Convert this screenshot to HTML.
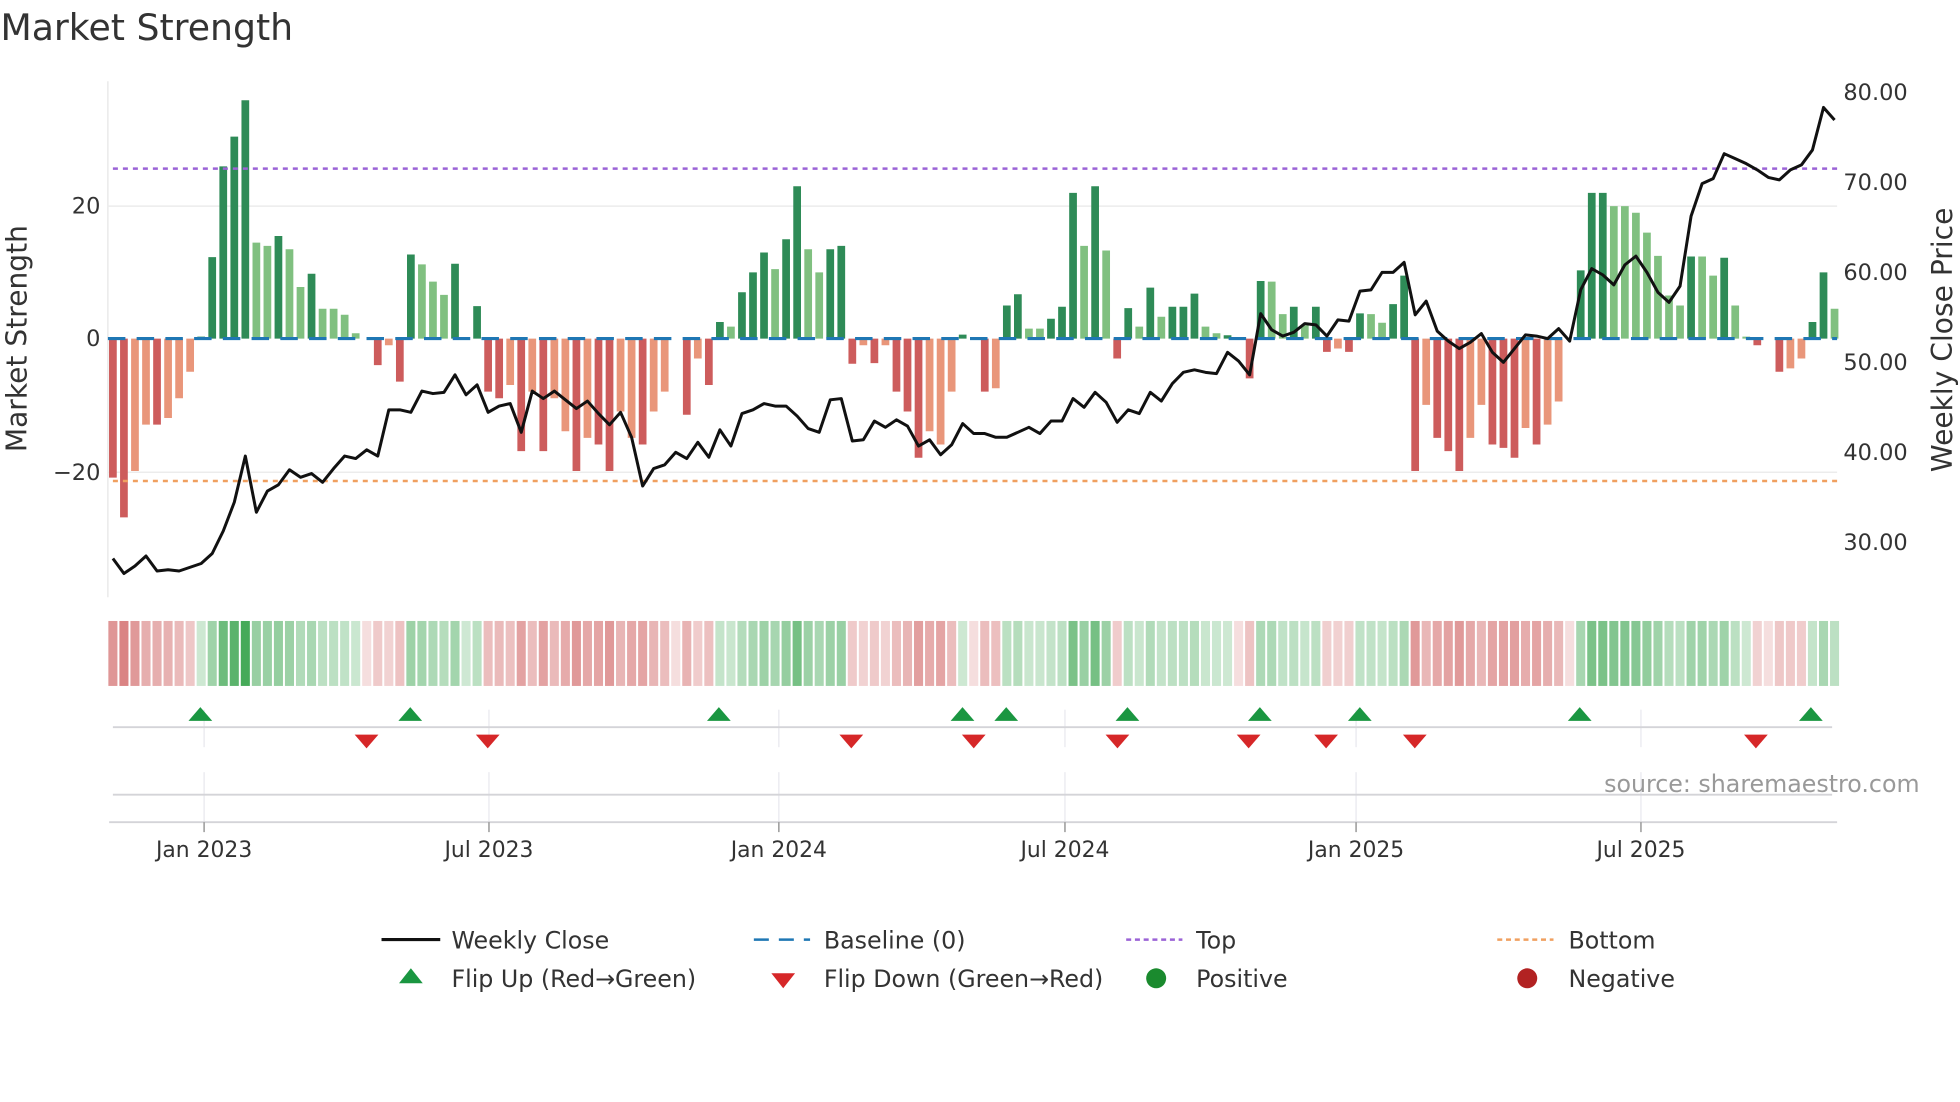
<!DOCTYPE html>
<html><head><meta charset="utf-8"><style>
html,body{margin:0;padding:0;background:#fff;}
svg{display:block;font-family:"DejaVu Sans","Liberation Sans",sans-serif;}
.g{fill:#3ca550}.r{fill:#cd5a5a}
</style></head><body>
<svg width="1960" height="1102" viewBox="0 0 1568 882" xmlns="http://www.w3.org/2000/svg">
<rect width="1568" height="882" fill="#fff"/>
<text x="0" y="32" font-size="29" fill="#333">Market Strength</text>
<line x1="86" y1="65" x2="86" y2="478" stroke="#e6e6e6" stroke-width="1"/>
<line x1="86" y1="165" x2="1470" y2="165" stroke="#ececec" stroke-width="1.2"/>
<line x1="86" y1="378" x2="1470" y2="378" stroke="#ececec" stroke-width="1.2"/>
<g transform="translate(90,271) scale(8.833,-5.3)">
<path fill="#2e8b57" d="M7.65 0V0.3h0.7V0zM8.65 0V12.3h0.7V0zM9.65 0V26h0.7V0zM10.65 0V30.5h0.7V0zM11.65 0V36h0.7V0zM14.65 0V15.5h0.7V0zM17.65 0V9.8h0.7V0zM26.65 0V12.7h0.7V0zM30.65 0V11.3h0.7V0zM32.65 0V4.9h0.7V0zM54.65 0V2.5h0.7V0zM56.65 0V7h0.7V0zM57.65 0V10h0.7V0zM58.65 0V13h0.7V0zM60.65 0V15h0.7V0zM61.65 0V23h0.7V0zM64.65 0V13.5h0.7V0zM65.65 0V14h0.7V0zM76.65 0V0.6h0.7V0zM80.65 0V5h0.7V0zM81.65 0V6.7h0.7V0zM84.65 0V3h0.7V0zM85.65 0V4.8h0.7V0zM86.65 0V22h0.7V0zM88.65 0V23h0.7V0zM91.65 0V4.6h0.7V0zM93.65 0V7.7h0.7V0zM95.65 0V4.8h0.7V0zM96.65 0V4.8h0.7V0zM97.65 0V6.8h0.7V0zM100.65 0V0.5h0.7V0zM103.65 0V8.7h0.7V0zM106.65 0V4.8h0.7V0zM108.65 0V4.8h0.7V0zM112.65 0V3.8h0.7V0zM115.65 0V5.2h0.7V0zM116.65 0V9.5h0.7V0zM132.65 0V10.3h0.7V0zM133.65 0V22h0.7V0zM134.65 0V22h0.7V0zM142.65 0V12.4h0.7V0zM145.65 0V12.2h0.7V0zM153.65 0V2.5h0.7V0zM154.65 0V10h0.7V0z"/>
<path fill="#80c080" d="M12.65 0V14.5h0.7V0zM13.65 0V14h0.7V0zM15.65 0V13.5h0.7V0zM16.65 0V7.8h0.7V0zM18.65 0V4.5h0.7V0zM19.65 0V4.5h0.7V0zM20.65 0V3.6h0.7V0zM21.65 0V0.8h0.7V0zM27.65 0V11.2h0.7V0zM28.65 0V8.6h0.7V0zM29.65 0V6.6h0.7V0zM31.65 0V0.2h0.7V0zM55.65 0V1.8h0.7V0zM59.65 0V10.5h0.7V0zM62.65 0V13.5h0.7V0zM63.65 0V10h0.7V0zM82.65 0V1.5h0.7V0zM83.65 0V1.5h0.7V0zM87.65 0V14h0.7V0zM89.65 0V13.3h0.7V0zM92.65 0V1.8h0.7V0zM94.65 0V3.3h0.7V0zM98.65 0V1.8h0.7V0zM99.65 0V0.8h0.7V0zM104.65 0V8.6h0.7V0zM105.65 0V3.7h0.7V0zM107.65 0V2h0.7V0zM113.65 0V3.7h0.7V0zM114.65 0V2.4h0.7V0zM135.65 0V20h0.7V0zM136.65 0V20h0.7V0zM137.65 0V19h0.7V0zM138.65 0V16h0.7V0zM139.65 0V12.5h0.7V0zM140.65 0V6.5h0.7V0zM141.65 0V5h0.7V0zM143.65 0V12.4h0.7V0zM144.65 0V9.5h0.7V0zM146.65 0V5h0.7V0zM147.65 0V0.3h0.7V0zM155.65 0V4.5h0.7V0z"/>
<path fill="#cd5c5c" d="M-0.35 0V-21h0.7V0zM0.65 0V-27h0.7V0zM3.65 0V-13h0.7V0zM23.65 0V-4h0.7V0zM25.65 0V-6.5h0.7V0zM33.65 0V-8h0.7V0zM34.65 0V-9h0.7V0zM36.65 0V-17h0.7V0zM38.65 0V-17h0.7V0zM41.65 0V-20h0.7V0zM43.65 0V-16h0.7V0zM44.65 0V-20h0.7V0zM47.65 0V-16h0.7V0zM51.65 0V-11.5h0.7V0zM53.65 0V-7h0.7V0zM66.65 0V-3.8h0.7V0zM68.65 0V-3.7h0.7V0zM70.65 0V-8h0.7V0zM71.65 0V-11h0.7V0zM72.65 0V-18h0.7V0zM78.65 0V-8h0.7V0zM90.65 0V-3h0.7V0zM102.65 0V-6h0.7V0zM109.65 0V-2h0.7V0zM111.65 0V-2h0.7V0zM117.65 0V-20h0.7V0zM119.65 0V-15h0.7V0zM120.65 0V-17h0.7V0zM121.65 0V-20h0.7V0zM124.65 0V-16h0.7V0zM125.65 0V-16.5h0.7V0zM126.65 0V-18h0.7V0zM128.65 0V-16h0.7V0zM148.65 0V-1h0.7V0zM150.65 0V-5h0.7V0z"/>
<path fill="#e9967a" d="M1.65 0V-20h0.7V0zM2.65 0V-13h0.7V0zM4.65 0V-12h0.7V0zM5.65 0V-9h0.7V0zM6.65 0V-5h0.7V0zM24.65 0V-1h0.7V0zM35.65 0V-7h0.7V0zM37.65 0V-8h0.7V0zM39.65 0V-9h0.7V0zM40.65 0V-14h0.7V0zM42.65 0V-15h0.7V0zM45.65 0V-11h0.7V0zM46.65 0V-15h0.7V0zM48.65 0V-11h0.7V0zM49.65 0V-8h0.7V0zM52.65 0V-3h0.7V0zM67.65 0V-1h0.7V0zM69.65 0V-1h0.7V0zM73.65 0V-14h0.7V0zM74.65 0V-16h0.7V0zM75.65 0V-8h0.7V0zM79.65 0V-7.5h0.7V0zM110.65 0V-1.5h0.7V0zM118.65 0V-10h0.7V0zM122.65 0V-15h0.7V0zM123.65 0V-10h0.7V0zM127.65 0V-13.5h0.7V0zM129.65 0V-13h0.7V0zM130.65 0V-9.5h0.7V0zM151.65 0V-4.5h0.7V0zM152.65 0V-3h0.7V0z"/>
</g>
<line x1="86" y1="271" x2="1470" y2="271" stroke="#1f77b4" stroke-width="2.5" stroke-dasharray="14,9"/>
<line x1="90" y1="135" x2="1470" y2="135" stroke="#9b63d6" stroke-width="2" stroke-dasharray="4,4"/>
<line x1="90" y1="385" x2="1470" y2="385" stroke="#f0a060" stroke-width="2" stroke-dasharray="4,4"/>
<g transform="translate(90,0) scale(8.833,1)">
<polyline fill="none" stroke="#111" stroke-width="3" stroke-linejoin="round" vector-effect="non-scaling-stroke" points="0,447 1,459 2,453 3,445 4,457 5,456 6,457 7,454 8,451 9,443 10,425 11,402 12,365 13,410 14,393 15,388 16,376 17,382 18,379 19,386 20,375 21,365 22,367 23,360 24,365 25,328 26,328 27,330 28,313 29,315 30,314 31,300 32,316 33,308 34,330 35,325 36,323 37,346 38,313 39,319 40,313 41,320 42,327 43,321 44,331 45,340 46,330 47,350 48,389 49,375 50,372 51,362 52,367 53,354 54,366 55,344 56,357 57,331 58,328 59,323 60,325 61,325 62,333 63,343 64,346 65,320 66,319 67,353 68,352 69,337 70,342 71,336 72,341 73,357 74,352 75,364 76,356 77,339 78,347 79,347 80,350 81,350 82,346 83,342 84,347 85,337 86,337 87,319 88,326 89,314 90,322 91,338 92,328 93,331 94,314 95,321 96,307 97,298 98,296 99,298 100,299 101,282 102,289 103,300 104,251 105,264 106,269 107,266 108,259 109,260 110,269 111,256 112,257 113,233 114,232 115,218 116,218 117,210 118,252 119,241 120,265 121,273 122,279 123,274 124,267 125,282 126,290 127,279 128,268 129,269 130,271 131,263 132,273 133,232 134,215 135,220 136,228 137,212 138,205 139,218 140,234 141,242 142,229 143,173 144,147 145,143 146,123 147,127 148,131 149,136 150,142 151,144 152,136 153,132 154,120 155,86 156,96"/>
</g>
<g font-size="18" fill="#333">
<text x="80" y="171" text-anchor="end">20</text>
<text x="80" y="277" text-anchor="end">0</text>
<text x="80" y="384" text-anchor="end">−20</text>
<text x="1475" y="80">80.00</text>
<text x="1475" y="152">70.00</text>
<text x="1475" y="224">60.00</text>
<text x="1475" y="296">50.00</text>
<text x="1475" y="368">40.00</text>
<text x="1475" y="440">30.00</text>
</g>
<text transform="translate(21,271) rotate(-90)" font-size="22.5" fill="#333" text-anchor="middle">Market Strength</text>
<text transform="translate(1562,272) rotate(-90)" font-size="22.5" fill="#333" text-anchor="middle">Weekly Close Price</text>
<g transform="translate(90,497) scale(8.833,1)">
<rect class="r" x="-0.41" width="0.82" height="52" fill-opacity=".64"/>
<rect class="r" x="0.59" width="0.82" height="52" fill-opacity=".75"/>
<rect class="r" x="1.59" width="0.82" height="52" fill-opacity=".62"/>
<rect class="r" x="2.59" width="0.82" height="52" fill-opacity=".49"/>
<rect class="r" x="3.59" width="0.82" height="52" fill-opacity=".49"/>
<rect class="r" x="4.59" width="0.82" height="52" fill-opacity=".47"/>
<rect class="r" x="5.59" width="0.82" height="52" fill-opacity=".42"/>
<rect class="r" x="6.59" width="0.82" height="52" fill-opacity=".34"/>
<rect class="g" x="7.59" width="0.82" height="52" fill-opacity=".26"/>
<rect class="g" x="8.59" width="0.82" height="52" fill-opacity=".49"/>
<rect class="g" x="9.59" width="0.82" height="52" fill-opacity=".75"/>
<rect class="g" x="10.59" width="0.82" height="52" fill-opacity=".84"/>
<rect class="g" x="11.59" width="0.82" height="52" fill-opacity=".95"/>
<rect class="g" x="12.59" width="0.82" height="52" fill-opacity=".53"/>
<rect class="g" x="13.59" width="0.82" height="52" fill-opacity=".52"/>
<rect class="g" x="14.59" width="0.82" height="52" fill-opacity=".55"/>
<rect class="g" x="15.59" width="0.82" height="52" fill-opacity=".51"/>
<rect class="g" x="16.59" width="0.82" height="52" fill-opacity=".40"/>
<rect class="g" x="17.59" width="0.82" height="52" fill-opacity=".44"/>
<rect class="g" x="18.59" width="0.82" height="52" fill-opacity=".34"/>
<rect class="g" x="19.59" width="0.82" height="52" fill-opacity=".34"/>
<rect class="g" x="20.59" width="0.82" height="52" fill-opacity=".32"/>
<rect class="g" x="21.59" width="0.82" height="52" fill-opacity=".27"/>
<rect class="r" x="22.59" width="0.82" height="52" fill-opacity=".2"/>
<rect class="r" x="23.59" width="0.82" height="52" fill-opacity=".32"/>
<rect class="r" x="24.59" width="0.82" height="52" fill-opacity=".27"/>
<rect class="r" x="25.59" width="0.82" height="52" fill-opacity=".37"/>
<rect class="g" x="26.59" width="0.82" height="52" fill-opacity=".50"/>
<rect class="g" x="27.59" width="0.82" height="52" fill-opacity=".47"/>
<rect class="g" x="28.59" width="0.82" height="52" fill-opacity=".42"/>
<rect class="g" x="29.59" width="0.82" height="52" fill-opacity=".38"/>
<rect class="g" x="30.59" width="0.82" height="52" fill-opacity=".47"/>
<rect class="g" x="31.59" width="0.82" height="52" fill-opacity=".25"/>
<rect class="g" x="32.59" width="0.82" height="52" fill-opacity=".35"/>
<rect class="r" x="33.59" width="0.82" height="52" fill-opacity=".40"/>
<rect class="r" x="34.59" width="0.82" height="52" fill-opacity=".42"/>
<rect class="r" x="35.59" width="0.82" height="52" fill-opacity=".38"/>
<rect class="r" x="36.59" width="0.82" height="52" fill-opacity=".56"/>
<rect class="r" x="37.59" width="0.82" height="52" fill-opacity=".40"/>
<rect class="r" x="38.59" width="0.82" height="52" fill-opacity=".56"/>
<rect class="r" x="39.59" width="0.82" height="52" fill-opacity=".42"/>
<rect class="r" x="40.59" width="0.82" height="52" fill-opacity=".51"/>
<rect class="r" x="41.59" width="0.82" height="52" fill-opacity=".62"/>
<rect class="r" x="42.59" width="0.82" height="52" fill-opacity=".53"/>
<rect class="r" x="43.59" width="0.82" height="52" fill-opacity=".55"/>
<rect class="r" x="44.59" width="0.82" height="52" fill-opacity=".62"/>
<rect class="r" x="45.59" width="0.82" height="52" fill-opacity=".45"/>
<rect class="r" x="46.59" width="0.82" height="52" fill-opacity=".53"/>
<rect class="r" x="47.59" width="0.82" height="52" fill-opacity=".55"/>
<rect class="r" x="48.59" width="0.82" height="52" fill-opacity=".45"/>
<rect class="r" x="49.59" width="0.82" height="52" fill-opacity=".40"/>
<rect class="r" x="50.59" width="0.82" height="52" fill-opacity=".2"/>
<rect class="r" x="51.59" width="0.82" height="52" fill-opacity=".46"/>
<rect class="r" x="52.59" width="0.82" height="52" fill-opacity=".31"/>
<rect class="r" x="53.59" width="0.82" height="52" fill-opacity=".38"/>
<rect class="g" x="54.59" width="0.82" height="52" fill-opacity=".30"/>
<rect class="g" x="55.59" width="0.82" height="52" fill-opacity=".28"/>
<rect class="g" x="56.59" width="0.82" height="52" fill-opacity=".39"/>
<rect class="g" x="57.59" width="0.82" height="52" fill-opacity=".44"/>
<rect class="g" x="58.59" width="0.82" height="52" fill-opacity=".50"/>
<rect class="g" x="59.59" width="0.82" height="52" fill-opacity=".45"/>
<rect class="g" x="60.59" width="0.82" height="52" fill-opacity=".54"/>
<rect class="g" x="61.59" width="0.82" height="52" fill-opacity=".70"/>
<rect class="g" x="62.59" width="0.82" height="52" fill-opacity=".51"/>
<rect class="g" x="63.59" width="0.82" height="52" fill-opacity=".44"/>
<rect class="g" x="64.59" width="0.82" height="52" fill-opacity=".51"/>
<rect class="g" x="65.59" width="0.82" height="52" fill-opacity=".52"/>
<rect class="r" x="66.59" width="0.82" height="52" fill-opacity=".32"/>
<rect class="r" x="67.59" width="0.82" height="52" fill-opacity=".27"/>
<rect class="r" x="68.59" width="0.82" height="52" fill-opacity=".32"/>
<rect class="r" x="69.59" width="0.82" height="52" fill-opacity=".27"/>
<rect class="r" x="70.59" width="0.82" height="52" fill-opacity=".40"/>
<rect class="r" x="71.59" width="0.82" height="52" fill-opacity=".45"/>
<rect class="r" x="72.59" width="0.82" height="52" fill-opacity=".58"/>
<rect class="r" x="73.59" width="0.82" height="52" fill-opacity=".51"/>
<rect class="r" x="74.59" width="0.82" height="52" fill-opacity=".55"/>
<rect class="r" x="75.59" width="0.82" height="52" fill-opacity=".40"/>
<rect class="g" x="76.59" width="0.82" height="52" fill-opacity=".26"/>
<rect class="r" x="77.59" width="0.82" height="52" fill-opacity=".2"/>
<rect class="r" x="78.59" width="0.82" height="52" fill-opacity=".40"/>
<rect class="r" x="79.59" width="0.82" height="52" fill-opacity=".39"/>
<rect class="g" x="80.59" width="0.82" height="52" fill-opacity=".35"/>
<rect class="g" x="81.59" width="0.82" height="52" fill-opacity=".38"/>
<rect class="g" x="82.59" width="0.82" height="52" fill-opacity=".28"/>
<rect class="g" x="83.59" width="0.82" height="52" fill-opacity=".28"/>
<rect class="g" x="84.59" width="0.82" height="52" fill-opacity=".31"/>
<rect class="g" x="85.59" width="0.82" height="52" fill-opacity=".34"/>
<rect class="g" x="86.59" width="0.82" height="52" fill-opacity=".68"/>
<rect class="g" x="87.59" width="0.82" height="52" fill-opacity=".52"/>
<rect class="g" x="88.59" width="0.82" height="52" fill-opacity=".70"/>
<rect class="g" x="89.59" width="0.82" height="52" fill-opacity=".51"/>
<rect class="r" x="90.59" width="0.82" height="52" fill-opacity=".31"/>
<rect class="g" x="91.59" width="0.82" height="52" fill-opacity=".34"/>
<rect class="g" x="92.59" width="0.82" height="52" fill-opacity=".28"/>
<rect class="g" x="93.59" width="0.82" height="52" fill-opacity=".40"/>
<rect class="g" x="94.59" width="0.82" height="52" fill-opacity=".31"/>
<rect class="g" x="95.59" width="0.82" height="52" fill-opacity=".34"/>
<rect class="g" x="96.59" width="0.82" height="52" fill-opacity=".34"/>
<rect class="g" x="97.59" width="0.82" height="52" fill-opacity=".38"/>
<rect class="g" x="98.59" width="0.82" height="52" fill-opacity=".28"/>
<rect class="g" x="99.59" width="0.82" height="52" fill-opacity=".27"/>
<rect class="g" x="100.59" width="0.82" height="52" fill-opacity=".26"/>
<rect class="r" x="101.59" width="0.82" height="52" fill-opacity=".2"/>
<rect class="r" x="102.59" width="0.82" height="52" fill-opacity=".36"/>
<rect class="g" x="103.59" width="0.82" height="52" fill-opacity=".42"/>
<rect class="g" x="104.59" width="0.82" height="52" fill-opacity=".42"/>
<rect class="g" x="105.59" width="0.82" height="52" fill-opacity=".32"/>
<rect class="g" x="106.59" width="0.82" height="52" fill-opacity=".34"/>
<rect class="g" x="107.59" width="0.82" height="52" fill-opacity=".29"/>
<rect class="g" x="108.59" width="0.82" height="52" fill-opacity=".34"/>
<rect class="r" x="109.59" width="0.82" height="52" fill-opacity=".29"/>
<rect class="r" x="110.59" width="0.82" height="52" fill-opacity=".28"/>
<rect class="r" x="111.59" width="0.82" height="52" fill-opacity=".29"/>
<rect class="g" x="112.59" width="0.82" height="52" fill-opacity=".32"/>
<rect class="g" x="113.59" width="0.82" height="52" fill-opacity=".32"/>
<rect class="g" x="114.59" width="0.82" height="52" fill-opacity=".30"/>
<rect class="g" x="115.59" width="0.82" height="52" fill-opacity=".35"/>
<rect class="g" x="116.59" width="0.82" height="52" fill-opacity=".43"/>
<rect class="r" x="117.59" width="0.82" height="52" fill-opacity=".62"/>
<rect class="r" x="118.59" width="0.82" height="52" fill-opacity=".44"/>
<rect class="r" x="119.59" width="0.82" height="52" fill-opacity=".53"/>
<rect class="r" x="120.59" width="0.82" height="52" fill-opacity=".56"/>
<rect class="r" x="121.59" width="0.82" height="52" fill-opacity=".62"/>
<rect class="r" x="122.59" width="0.82" height="52" fill-opacity=".53"/>
<rect class="r" x="123.59" width="0.82" height="52" fill-opacity=".44"/>
<rect class="r" x="124.59" width="0.82" height="52" fill-opacity=".55"/>
<rect class="r" x="125.59" width="0.82" height="52" fill-opacity=".56"/>
<rect class="r" x="126.59" width="0.82" height="52" fill-opacity=".58"/>
<rect class="r" x="127.59" width="0.82" height="52" fill-opacity=".50"/>
<rect class="r" x="128.59" width="0.82" height="52" fill-opacity=".55"/>
<rect class="r" x="129.59" width="0.82" height="52" fill-opacity=".49"/>
<rect class="r" x="130.59" width="0.82" height="52" fill-opacity=".43"/>
<rect class="r" x="131.59" width="0.82" height="52" fill-opacity=".2"/>
<rect class="g" x="132.59" width="0.82" height="52" fill-opacity=".45"/>
<rect class="g" x="133.59" width="0.82" height="52" fill-opacity=".68"/>
<rect class="g" x="134.59" width="0.82" height="52" fill-opacity=".68"/>
<rect class="g" x="135.59" width="0.82" height="52" fill-opacity=".64"/>
<rect class="g" x="136.59" width="0.82" height="52" fill-opacity=".64"/>
<rect class="g" x="137.59" width="0.82" height="52" fill-opacity=".62"/>
<rect class="g" x="138.59" width="0.82" height="52" fill-opacity=".56"/>
<rect class="g" x="139.59" width="0.82" height="52" fill-opacity=".49"/>
<rect class="g" x="140.59" width="0.82" height="52" fill-opacity=".38"/>
<rect class="g" x="141.59" width="0.82" height="52" fill-opacity=".35"/>
<rect class="g" x="142.59" width="0.82" height="52" fill-opacity=".49"/>
<rect class="g" x="143.59" width="0.82" height="52" fill-opacity=".49"/>
<rect class="g" x="144.59" width="0.82" height="52" fill-opacity=".43"/>
<rect class="g" x="145.59" width="0.82" height="52" fill-opacity=".49"/>
<rect class="g" x="146.59" width="0.82" height="52" fill-opacity=".35"/>
<rect class="g" x="147.59" width="0.82" height="52" fill-opacity=".26"/>
<rect class="r" x="148.59" width="0.82" height="52" fill-opacity=".27"/>
<rect class="r" x="149.59" width="0.82" height="52" fill-opacity=".2"/>
<rect class="r" x="150.59" width="0.82" height="52" fill-opacity=".34"/>
<rect class="r" x="151.59" width="0.82" height="52" fill-opacity=".33"/>
<rect class="r" x="152.59" width="0.82" height="52" fill-opacity=".31"/>
<rect class="g" x="153.59" width="0.82" height="52" fill-opacity=".30"/>
<rect class="g" x="154.59" width="0.82" height="52" fill-opacity=".44"/>
<rect class="g" x="155.59" width="0.82" height="52" fill-opacity=".34"/>
</g>
<g stroke="#e8e8ee" stroke-width="1">
<line x1="163" y1="568" x2="163" y2="598"/><line x1="391" y1="568" x2="391" y2="598"/><line x1="623" y1="568" x2="623" y2="598"/><line x1="852" y1="568" x2="852" y2="598"/><line x1="1085" y1="568" x2="1085" y2="598"/><line x1="1313" y1="568" x2="1313" y2="598"/>
<line x1="163" y1="618" x2="163" y2="658"/><line x1="391" y1="618" x2="391" y2="658"/><line x1="623" y1="618" x2="623" y2="658"/><line x1="852" y1="618" x2="852" y2="658"/><line x1="1085" y1="618" x2="1085" y2="658"/><line x1="1313" y1="618" x2="1313" y2="658"/>
</g>
<line x1="90" y1="582" x2="1466" y2="582" stroke="#d4d4d8" stroke-width="1.5"/>
<line x1="90" y1="636" x2="1466" y2="636" stroke="#d4d4d8" stroke-width="1.5"/>
<line x1="87" y1="658" x2="1470" y2="658" stroke="#d4d4d8" stroke-width="1.5"/>
<g fill="#1a9641">
<polygon points="150.5,577 169.5,577 160,566"/><polygon points="318.5,577 337.5,577 328,566"/><polygon points="565.5,577 584.5,577 575,566"/><polygon points="760.5,577 779.5,577 770,566"/><polygon points="795.5,577 814.5,577 805,566"/><polygon points="892.5,577 911.5,577 902,566"/><polygon points="998.5,577 1017.5,577 1008,566"/><polygon points="1078.5,577 1097.5,577 1088,566"/><polygon points="1254.5,577 1273.5,577 1264,566"/><polygon points="1439.5,577 1458.5,577 1449,566"/>
</g>
<g fill="#d62728">
<polygon points="283.5,588 302.5,588 293,599"/><polygon points="380.5,588 399.5,588 390,599"/><polygon points="671.5,588 690.5,588 681,599"/><polygon points="769.5,588 788.5,588 779,599"/><polygon points="884.5,588 903.5,588 894,599"/><polygon points="989.5,588 1008.5,588 999,599"/><polygon points="1051.5,588 1070.5,588 1061,599"/><polygon points="1122.5,588 1141.5,588 1132,599"/><polygon points="1395.5,588 1414.5,588 1405,599"/>
</g>
<g stroke="#999" stroke-width="1.2">
<line x1="163" y1="658" x2="163" y2="666"/><line x1="391" y1="658" x2="391" y2="666"/><line x1="623" y1="658" x2="623" y2="666"/><line x1="852" y1="658" x2="852" y2="666"/><line x1="1085" y1="658" x2="1085" y2="666"/><line x1="1313" y1="658" x2="1313" y2="666"/>
</g>
<g font-size="17.5" fill="#333" text-anchor="middle">
<text x="163" y="686">Jan 2023</text><text x="391" y="686">Jul 2023</text><text x="623" y="686">Jan 2024</text><text x="852" y="686">Jul 2024</text><text x="1085" y="686">Jan 2025</text><text x="1313" y="686">Jul 2025</text>
</g>
<text x="1536" y="634" font-size="19" fill="#999" text-anchor="end">source: sharemaestro.com</text>
<g font-size="19" fill="#333">
<line x1="305" y1="752" x2="352" y2="752" stroke="#111" stroke-width="2.5"/>
<text x="361" y="759">Weekly Close</text>
<line x1="603" y1="752" x2="648" y2="752" stroke="#1f77b4" stroke-width="2" stroke-dasharray="12,8"/>
<text x="659" y="759">Baseline (0)</text>
<line x1="901" y1="752" x2="946" y2="752" stroke="#9b63d6" stroke-width="2" stroke-dasharray="4,3"/>
<text x="957" y="759">Top</text>
<line x1="1198" y1="752" x2="1243" y2="752" stroke="#f0a060" stroke-width="2" stroke-dasharray="4,3"/>
<text x="1255" y="759">Bottom</text>
<polygon points="319,787 338,787 328.5,775" fill="#1a9641"/>
<text x="361" y="790">Flip Up (Red→Green)</text>
<polygon points="617,779 636,779 626.5,791" fill="#d62728"/>
<text x="659" y="790">Flip Down (Green→Red)</text>
<circle cx="925" cy="783" r="8" fill="#1a8a2e"/>
<text x="957" y="790">Positive</text>
<circle cx="1222" cy="783" r="8" fill="#b22222"/>
<text x="1255" y="790">Negative</text>
</g>
</svg>
</body></html>
